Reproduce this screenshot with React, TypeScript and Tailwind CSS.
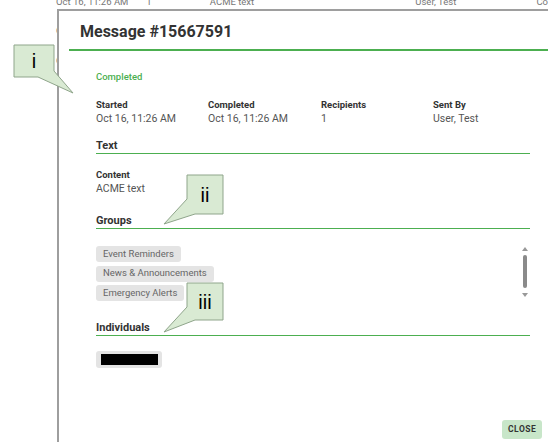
import React from 'react';

const font = { fontFamily: 'Roboto, "Liberation Sans", sans-serif' };

const bgRows = [0, 1, 2, 3, 4, 5, 6, 7, 8, 9, 10, 11, 12, 13, 14];

function SectionHeader({ title }: { title: string }) {
  return (
    <div className="border-b border-[#4caf50] text-[11px] font-bold leading-[14px] text-[#333]">
      {title}
    </div>
  );
}

function Field({ label, value }: { label: string; value: string }) {
  return (
    <div>
      <div className="text-[9.5px] font-bold leading-[14px] text-[#333]">{label}</div>
      <div className="text-[10.5px] leading-[14px] text-[#555]">{value}</div>
    </div>
  );
}

function Chip({ children }: { children: React.ReactNode }) {
  return (
    <span className="inline-flex h-[16px] items-center self-start rounded-[3px] bg-[#e4e4e4] px-[7px] text-[9.5px] text-[#666]">
      {children}
    </span>
  );
}

function Callout({ points, box, label }: { points: string; box: [number, number, number, number]; label: string }) {
  const [x, y, w, h] = box;
  return (
    <>
      <svg className="pointer-events-none absolute left-0 top-0" width="548" height="442">
        <polygon points={points} fill="#d9ead3" stroke="#8fa58b" strokeWidth="1" />
      </svg>
      <div
        className="absolute flex items-center justify-center text-[20px] leading-none text-black"
        style={{ left: x, top: y, width: w, height: h, fontFamily: '"Liberation Sans", Arial, sans-serif' }}
      >
        {label}
      </div>
    </>
  );
}

export default function App() {
  return (
    <div className="relative h-[442px] w-[548px] overflow-hidden bg-white" style={font}>
      {/* page table behind the dialog */}
      <div className="-mt-[4px] flex flex-col">
        {bgRows.map((r) => (
          <div key={r} className="mb-[17.5px] flex h-[12px] items-center whitespace-nowrap text-[9.5px] text-[#777]">
            <span className={r < 3 ? 'ml-[56px] w-[91px]' : 'ml-[60px] w-[87px]'}>Oct 16, 11:26 AM</span>
            <span className="w-[64px]">1</span>
            <span className="w-[207px]">ACME text</span>
            <span className="w-[122px]">User, Test</span>
            <span>Co</span>
          </div>
        ))}
      </div>

      {/* dialog */}
      <div className="absolute left-[57px] top-[9px] flex h-[440px] w-[500px] flex-col border-l-2 border-t-2 border-[#9e9e9e] bg-white">
        <div className="ml-[10px] flex h-[40px] items-center border-b-2 border-[#4caf50] pl-[11px] pt-[4px] text-[16px] font-bold text-[#333]">
          Message #15667591
        </div>

        <div className="flex w-[471px] flex-col pl-[37px]">
          <div className="mt-[19px] text-[9.5px] font-medium leading-[14px] text-[#4caf50]">Completed</div>

          <div className="mt-[14px] grid grid-cols-[112px_113px_112px_1fr]">
            <Field label="Started" value="Oct 16, 11:26 AM" />
            <Field label="Completed" value="Oct 16, 11:26 AM" />
            <Field label="Recipients" value="1" />
            <Field label="Sent By" value="User, Test" />
          </div>

          <div className="mt-[13px]">
            <SectionHeader title="Text" />
          </div>

          <div className="mt-[14px]">
            <Field label="Content" value="ACME text" />
          </div>

          <div className="mt-[18px]">
            <SectionHeader title="Groups" />
          </div>

          <div className="mt-[17px] flex">
            <div className="flex flex-1 flex-col gap-[3.5px]">
              <Chip>Event Reminders</Chip>
              <Chip>News &amp; Announcements</Chip>
              <Chip>Emergency Alerts</Chip>
            </div>
            <div className="mr-[2px] flex w-[6px] flex-col items-center pt-[1px]">
              <div className="h-0 w-0 border-x-[3px] border-b-[4px] border-x-transparent border-b-[#999]" />
              <div className="mt-[4px] h-[33px] w-[4px] rounded-full bg-[#8a8a8a]" />
              <div className="mt-[5px] h-0 w-0 border-x-[3px] border-t-[4px] border-x-transparent border-t-[#999]" />
            </div>
          </div>

          <div className="mt-[20px]">
            <SectionHeader title="Individuals" />
          </div>

          <div className="mt-[15px] flex h-[17px] w-[66px] items-center justify-center rounded-[3px] bg-[#e4e4e4]">
            <div className="h-[11px] w-[57px] bg-black" />
          </div>
        </div>

        <div className="mt-[52px] flex pl-[443px]">
          <button className="h-[19px] rounded-[3px] bg-[#c8e6c9] px-[6px] text-[8.5px] font-bold tracking-[0.5px] text-[#333]">
            CLOSE
          </button>
        </div>
      </div>

      {/* annotation callouts */}
      <Callout points="14,45 54,45 54,71 73,93 38,77 14,77" box={[14, 45, 40, 32]} label="i" />
      <Callout points="187,175 223,175 223,214 195,214 164,224 187,199" box={[187, 175, 36, 39]} label="ii" />
      <Callout points="187,283 223,283 223,320 195,320 164,332 187,307" box={[187, 283, 36, 37]} label="iii" />
    </div>
  );
}
